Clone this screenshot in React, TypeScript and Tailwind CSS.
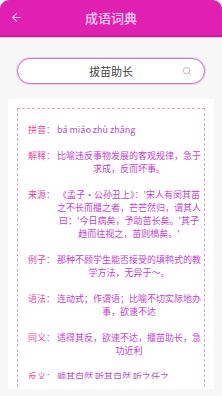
import { ArrowLeft, Search } from "lucide-react";

const rows: { label: string; value: string; left?: boolean }[] = [
  { label: "拼音：", value: "bá miáo zhù zhǎng", left: true },
  { label: "解释：", value: "比喻违反事物发展的客观规律，急于求成，反而坏事。" },
  {
    label: "来源：",
    value:
      "《孟子·公孙丑上》：'宋人有闵其苗之不长而揠之者，芒芒然归，谓其人曰：'今日病矣，予助苗长矣。'其子趋而往视之，苗则槁矣。'",
  },
  { label: "例子：", value: "那种不顾学生能否接受的填鸭式的教学方法，无异于～。" },
  { label: "语法：", value: "连动式；作谓语；比喻不切实际地办事，欲速不达" },
  { label: "同义：", value: "适得其反，欲速不达，揠苗助长，急功近利" },
  { label: "反义：", value: "顺其自然 听其自然 听之任之", left: true },
];

export default function App() {
  return (
    <div className="w-[222px] h-[396px] overflow-hidden bg-[#f7f7f7] font-['Noto_Sans_CJK_SC',sans-serif]">
      <div className="h-[37px] bg-[#e020b1] rounded-t-[9px] border-b-2 border-[#c11c9b] flex items-center relative shadow-[0_1px_0_#f6b8e6]">
        <ArrowLeft className="absolute left-[10px] w-[13px] h-[13px] text-[#f7c2ea]" strokeWidth={2} />
        <div className="flex-1 text-center text-[13px] text-[#f9cdee] font-medium">成语词典</div>
      </div>

      <div className="mt-[21px] mx-[17px] h-[26px] rounded-full bg-white border-[1.5px] border-[#c27bc4] shadow-[0_0_0_1px_#f4cdef] flex items-center relative">
        <div className="flex-1 text-center text-[11px] text-[#444]">拔苗助长</div>
        <Search className="absolute right-[12px] w-[10px] h-[10px] text-[#c9a5c3]" strokeWidth={2} />
      </div>

      <div className="mt-[15px] mx-[8px] h-[290px] bg-white pt-[9px] px-[9px]">
        <div className="h-[279px] border-x border-t border-dashed border-[#cfa9cc] flex flex-col pt-[14px] pb-[8px]">
          <div className="flex-1 overflow-hidden">
            <div className="flex flex-col gap-[13px]">
              {rows.map((r) => (
                <div key={r.label} className="flex text-[9px] leading-[13px] pl-[10px]">
                  <div className="w-[29px] shrink-0 text-[#e24aa6]">{r.label}</div>
                  <div
                    className={`w-[144px] ${
                      r.left ? "text-left text-[#b24fc2]" : "text-center text-[#c23fcf]"
                    }`}
                  >
                    {r.value}
                  </div>
                </div>
              ))}
            </div>
          </div>
        </div>
      </div>
    </div>
  );
}
